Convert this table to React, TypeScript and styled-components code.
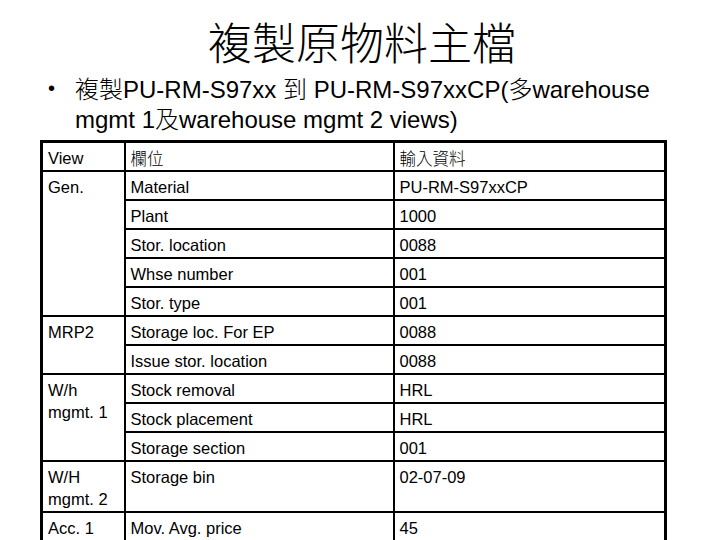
import React from "react";
import styled, { createGlobalStyle } from "styled-components";

const GlobalStyle = createGlobalStyle`
  html, body { margin: 0; padding: 0; background: #ffffff; }
  * { box-sizing: border-box; }
`;

const Slide = styled.div`
  width: 720px;
  height: 540px;
  overflow: hidden;
  background: #ffffff;
  color: #000000;
  font-family: "Liberation Sans", Arial, "Noto Sans CJK TC", sans-serif;
`;

const Title = styled.h1`
  margin: 9px 0 0 0;
  padding-left: 4px;
  height: 64px;
  font-family: "Noto Sans CJK TC", "Noto Sans CJK SC", sans-serif;
  font-weight: 300;
  font-size: 44px;
  line-height: 64px;
  text-align: center;
`;

const BulletList = styled.ul`
  list-style: none;
  margin: 1px 0 0 0;
  padding: 0 0 0 48px;
`;

const BulletItem = styled.li`
  display: flex;
  font-size: 24px;
  line-height: 28px;
`;

const BulletMark = styled.span`
  width: 27px;
  flex: none;
  font-size: 20px;
`;

const Cjk = styled.span`
  font-family: "Noto Sans CJK TC", "Noto Sans CJK SC", sans-serif;
  font-weight: 300;
`;

const Table = styled.table`
  margin: 6px 0 0 40px;
  width: 624px;
  table-layout: fixed;
  border-collapse: collapse;
  border: 3px solid #000;
`;

const Cell = styled.td<{ $header?: boolean }>`
  border: 2px solid #000;
  padding: 4px 2px 1px 5px;
  font-size: 16.5px;
  line-height: 22px;
  vertical-align: top;
  white-space: nowrap;
  ${(p) =>
    p.$header
      ? `font-family: "Noto Sans CJK TC", "Noto Sans CJK SC", sans-serif; font-weight: 300;`
      : ""}
`;

const ViewCell = styled(Cell)`
  font-family: "Liberation Sans", Arial, sans-serif;
`;

type Group = { view: string[]; rows: [string, string][] };

const groups: Group[] = [
  {
    view: ["Gen."],
    rows: [
      ["Material", "PU-RM-S97xxCP"],
      ["Plant", "1000"],
      ["Stor. location", "0088"],
      ["Whse number", "001"],
      ["Stor. type", "001"],
    ],
  },
  {
    view: ["MRP2"],
    rows: [
      ["Storage loc. For EP", "0088"],
      ["Issue stor. location", "0088"],
    ],
  },
  {
    view: ["W/h", "mgmt. 1"],
    rows: [
      ["Stock removal", "HRL"],
      ["Stock placement", "HRL"],
      ["Storage section", "001"],
    ],
  },
  {
    view: ["W/H", "mgmt. 2"],
    rows: [["Storage bin", "02-07-09"]],
  },
  {
    view: ["Acc. 1"],
    rows: [["Mov. Avg. price", "45"]],
  },
];

export default function App() {
  return (
    <Slide>
      <GlobalStyle />
      <Title>複製原物料主檔</Title>
      <BulletList>
        <BulletItem>
          <BulletMark>•</BulletMark>
          <span>
            <Cjk>複製</Cjk>PU-RM-S97xx <Cjk>到</Cjk> PU-RM-S97xxCP(<Cjk>多</Cjk>warehouse
            <br />
            mgmt 1<Cjk>及</Cjk>warehouse mgmt 2 views)
          </span>
        </BulletItem>
      </BulletList>
      <Table>
        <colgroup>
          <col style={{ width: 83 }} />
          <col style={{ width: 269 }} />
          <col style={{ width: 272 }} />
        </colgroup>
        <tbody>
          <tr>
            <ViewCell>View</ViewCell>
            <Cell $header>欄位</Cell>
            <Cell $header>輸入資料</Cell>
          </tr>
          {groups.map((g) =>
            g.rows.map((r, i) => (
              <tr key={g.view.join() + r[0]}>
                {i === 0 && (
                  <ViewCell rowSpan={g.rows.length}>
                    {g.view.map((line, k) => (
                      <React.Fragment key={line}>
                        {k > 0 && <br />}
                        {line}
                      </React.Fragment>
                    ))}
                  </ViewCell>
                )}
                <Cell>{r[0]}</Cell>
                <Cell>{r[1]}</Cell>
              </tr>
            ))
          )}
        </tbody>
      </Table>
    </Slide>
  );
}
